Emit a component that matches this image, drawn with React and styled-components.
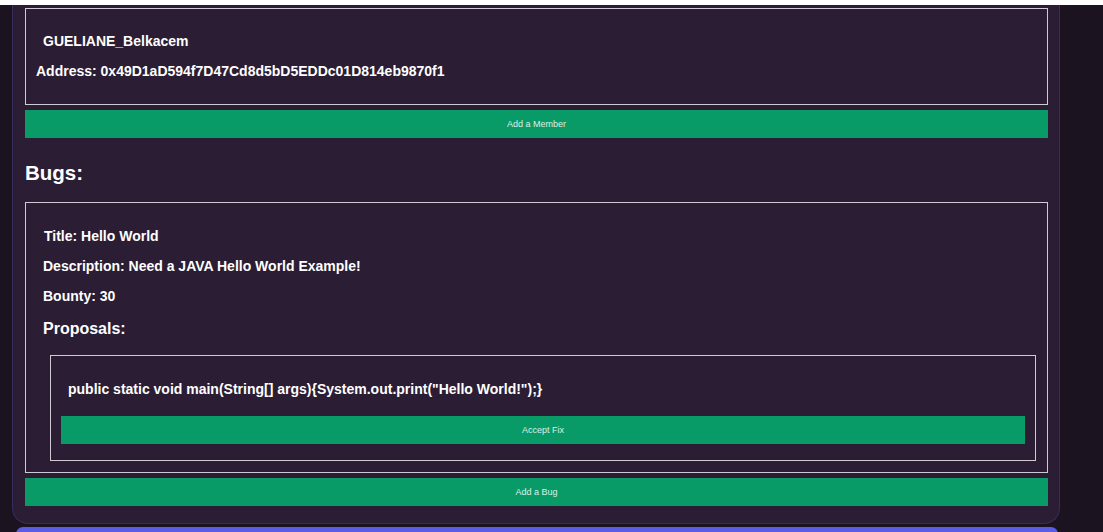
import React from "react";
import styled, { createGlobalStyle } from "styled-components";

const Global = createGlobalStyle`
  html, body {
    margin: 0;
    padding: 0;
    background: #1b1420;
    overflow: hidden;
    height: 532px;
  }
  * { box-sizing: border-box; }
  body {
    font-family: "Liberation Sans", Arial, sans-serif;
    color: #ffffff;
  }
`;

const TopStrip = styled.div`
  height: 5px;
  background: #ffffff;
`;

const Page = styled.div`
  width: 1060px;
  padding-left: 12px;
  display: flex;
  flex-direction: column;
`;

const Panel = styled.section`
  background: #2a1d34;
  border: 1px solid #3a2b5e;
  border-top: none;
  border-radius: 0 0 16px 16px;
  padding: 3px 11px 17px 12px;
  display: flex;
  flex-direction: column;
`;

const Card = styled.div`
  border: 1px solid #cfcad3;
  display: flex;
  flex-direction: column;
  padding: ${(p) => p.$pad};
`;

const Line = styled.p`
  margin: 0;
  font-size: 14px;
  line-height: 16px;
  font-weight: bold;
  padding-left: ${(p) => p.$indent || 0}px;
  margin-top: ${(p) => p.$top || 0}px;
`;

const Heading = styled.h2`
  margin: 23px 0 17px;
  font-size: 20.5px;
  line-height: 24px;
  font-weight: bold;
`;

const SubHeading = styled.h3`
  margin: 15px 0 16px;
  font-size: 16px;
  line-height: 20px;
  font-weight: bold;
`;

const ActionButton = styled.button`
  display: block;
  width: 100%;
  height: 28px;
  margin-top: ${(p) => p.$top || 0}px;
  border: none;
  background: #099b67;
  color: #dcefe7;
  font-family: "Liberation Sans", Arial, sans-serif;
  font-size: 9px;
  cursor: pointer;
  padding: 0;
`;

const Proposal = styled(Card)`
  margin-left: 7px;
`;

const BlueCard = styled.div`
  margin: 3px 2px 0 4px;
  height: 7px;
  background: #5b5ce6;
  border-radius: 12px 12px 0 0;
`;

export default function App() {
  return (
    <>
      <Global />
      <TopStrip />
      <Page>
        <Panel>
          <Card $pad="24px 10px 25px 10px">
            <Line $indent={7}>GUELIANE_Belkacem</Line>
            <Line $top={14}>Address: 0x49D1aD594f7D47Cd8d5bD5EDDc01D814eb9870f1</Line>
          </Card>
          <ActionButton $top={5}>Add a Member</ActionButton>

          <Heading>Bugs:</Heading>

          <Card $pad="25px 11px 11px 17px">
            <Line $indent={1}>Title: Hello World</Line>
            <Line $top={14}>Description: Need a JAVA Hello World Example!</Line>
            <Line $top={14}>Bounty: 30</Line>
            <SubHeading>Proposals:</SubHeading>
            <Proposal $pad="25px 10px 16px 10px">
              <Line $indent={7}>
                public static void main(String[] args){"{"}System.out.print("Hello World!");{"}"}
              </Line>
              <ActionButton $top={19}>Accept Fix</ActionButton>
            </Proposal>
          </Card>
          <ActionButton $top={5}>Add a Bug</ActionButton>
        </Panel>
        <BlueCard />
      </Page>
    </>
  );
}
